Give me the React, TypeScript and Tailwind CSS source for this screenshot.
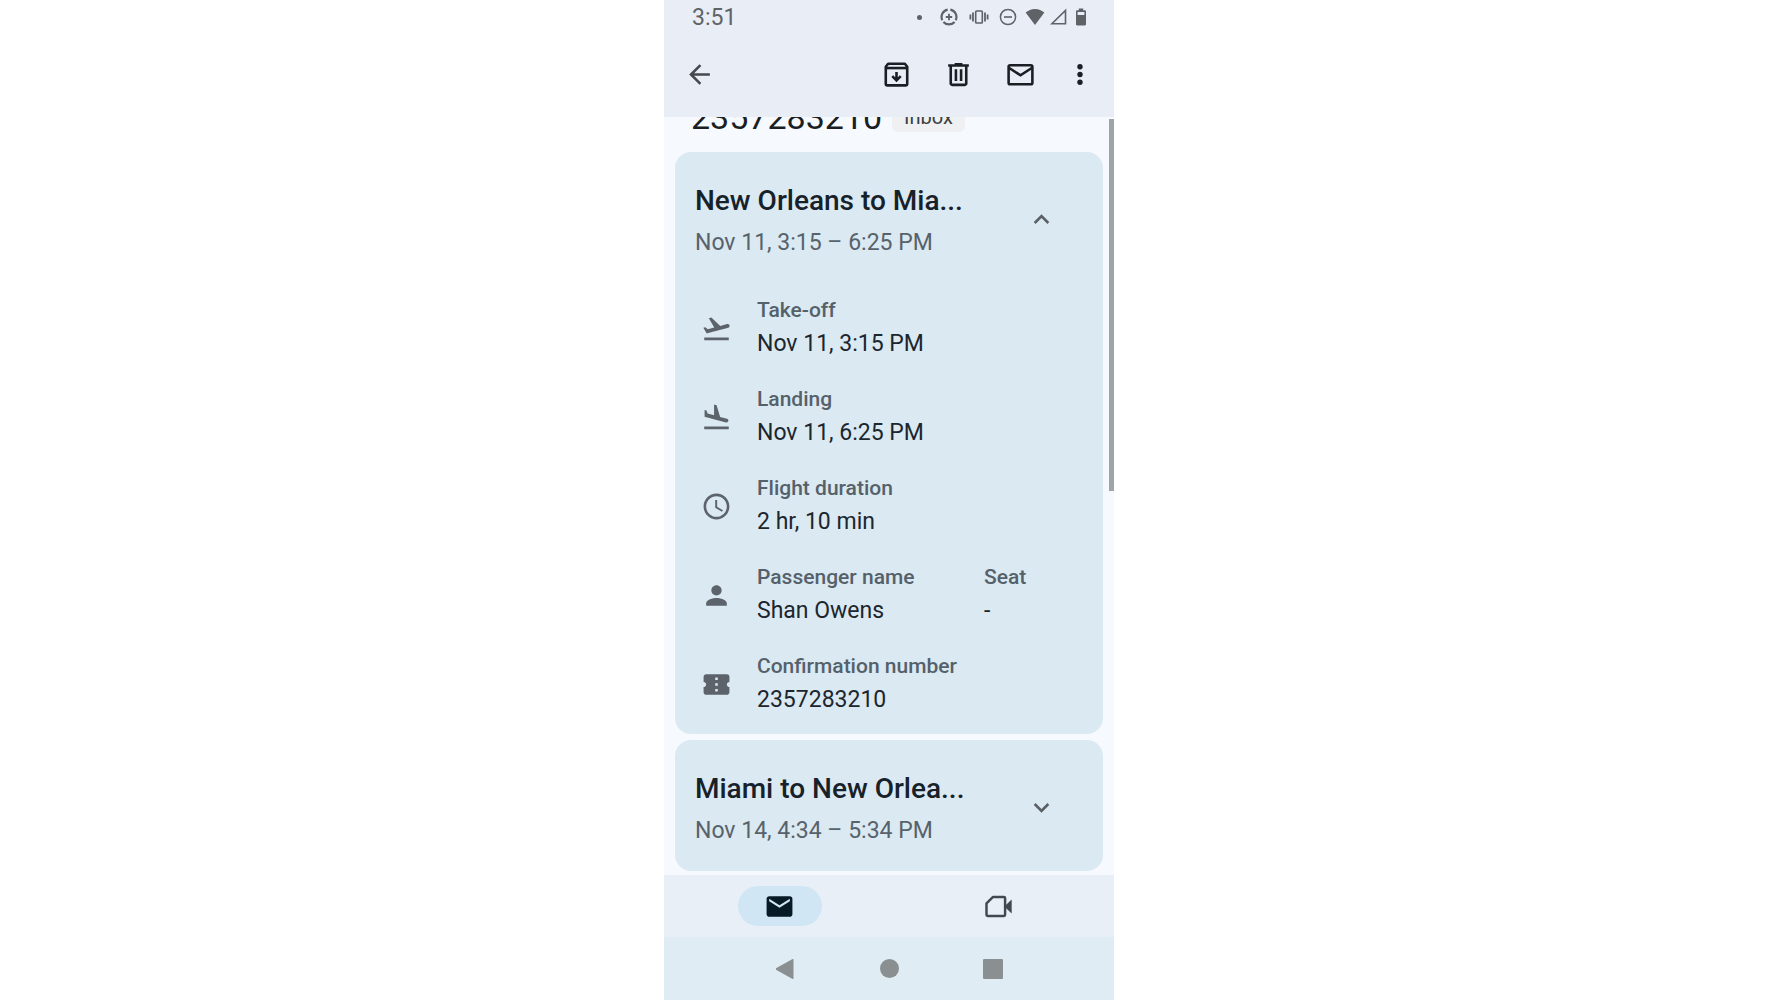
import { useState } from 'react';
import type { ReactNode } from 'react';
import {
  MdArrowBack,
  MdConfirmationNumber,
  MdExpandLess,
  MdExpandMore,
  MdFlightLand,
  MdFlightTakeoff,
  MdMail,
  MdPerson,
  MdSchedule,
} from 'react-icons/md';

type Field = { label: string; value: string };
type Detail = { icon: ReactNode; fields: Field[] };
type Flight = { id: string; title: string; time: string; details: Detail[] };

const flights: Flight[] = [
  {
    id: 'outbound',
    title: 'New Orleans to Mia...',
    time: 'Nov 11, 3:15 – 6:25 PM',
    details: [
      {
        icon: <MdFlightTakeoff />,
        fields: [{ label: 'Take-off', value: 'Nov 11, 3:15 PM' }],
      },
      {
        icon: <MdFlightLand />,
        fields: [{ label: 'Landing', value: 'Nov 11, 6:25 PM' }],
      },
      {
        icon: <MdSchedule />,
        fields: [{ label: 'Flight duration', value: '2 hr, 10 min' }],
      },
      {
        icon: <MdPerson />,
        fields: [
          { label: 'Passenger name', value: 'Shan Owens' },
          { label: 'Seat', value: '-' },
        ],
      },
      {
        icon: <MdConfirmationNumber />,
        fields: [{ label: 'Confirmation number', value: '2357283210' }],
      },
    ],
  },
  {
    id: 'return',
    title: 'Miami to New Orlea...',
    time: 'Nov 14, 4:34 – 5:34 PM',
    details: [],
  },
];

function StatusBar() {
  return (
    <div className="flex h-9 items-center justify-between pr-[27px] pl-7 text-[#5f6368]">
      <span className="text-[23px]">3:51</span>
      <div className="flex items-center pb-0.5">
        <span className="mr-[18px] size-[5px] rounded-full bg-current" />
        {/* data saver */}
        <svg className="mr-[11px] size-[18px]" viewBox="0 0 18 18" fill="none" stroke="currentColor">
          <path d="M10.3 1.6a7.5 7.5 0 0 1 5.4 10.6M14.6 13.9a7.5 7.5 0 0 1-11.2 0M2.3 12.2A7.5 7.5 0 0 1 7.7 1.6" strokeWidth="2.2" />
          <path d="M9 5.8v6.4M5.8 9h6.4" strokeWidth="1.8" />
        </svg>
        {/* vibrate */}
        <svg className="mr-2.5 h-[18px] w-5" viewBox="0 0 20 18" fill="none" stroke="currentColor">
          <rect x="6.7" y="3" width="6.6" height="12" rx="0.8" strokeWidth="1.6" />
          <path d="M4 4.5v9M16 4.5v9M1.4 6.5v5M18.6 6.5v5" strokeWidth="1.8" />
        </svg>
        {/* do not disturb */}
        <svg className="mr-2 size-[18px]" viewBox="0 0 18 18" fill="none" stroke="currentColor">
          <circle cx="9" cy="9" r="7.6" strokeWidth="1.5" />
          <path d="M5 9h8" strokeWidth="1.6" />
        </svg>
        {/* wifi */}
        <svg className="mr-[5px] h-[18px] w-5" viewBox="0 0 20 18" fill="currentColor">
          <path d="M10 17 .6 4.6C3.2 2.3 6.3.9 10 .9s6.8 1.4 9.4 3.7z" />
        </svg>
        {/* signal */}
        <svg className="mr-2 h-[18px] w-[17px]" viewBox="0 0 17 18" fill="none" stroke="currentColor">
          <path d="M15.5 2.4v13.4H1.9z" strokeWidth="1.6" />
        </svg>
        {/* battery */}
        <svg className="h-[18px] w-3" viewBox="0 0 12 18" fill="currentColor">
          <path fillRule="evenodd" d="M3.8.5h4.4v1.7h1.6c.7 0 1.2.5 1.2 1.2v12.9c0 .7-.5 1.2-1.2 1.2H2.2c-.7 0-1.2-.5-1.2-1.2V3.4c0-.7.5-1.2 1.2-1.2h1.6zM2.6 4v3h6.8V4z" />
        </svg>
      </div>
    </div>
  );
}

function AppBar() {
  return (
    <div className="flex h-[81px] items-center justify-between pr-5 pb-1 pl-5 text-[#1b1f23]">
      <button type="button" aria-label="Back" className="text-[#45494d]">
        <MdArrowBack className="size-[31px]" />
      </button>
      <div className="flex gap-[31px]">
        <button type="button" aria-label="Archive">
          <svg className="size-[31px]" viewBox="0 0 24 24" fill="none" stroke="currentColor" strokeWidth="2">
            <path d="M5.5 3.7h13L20.3 6v13.2c0 .7-.5 1.2-1.2 1.2H4.9c-.7 0-1.2-.5-1.2-1.2V6z" strokeLinejoin="round" />
            <path d="M4 7h16" />
            <path d="M12 10v6.2M8.7 13.2l3.3 3.3 3.3-3.3" />
          </svg>
        </button>
        <button type="button" aria-label="Delete">
          <svg className="size-[31px]" viewBox="0 0 24 24" fill="currentColor">
            <path d="M7 21c-.55 0-1.02-.2-1.41-.59A1.93 1.93 0 0 1 5 19V6H4V4h5V3h6v1h5v2h-1v13c0 .55-.2 1.02-.59 1.41-.39.39-.86.59-1.41.59H7ZM17 6H7v13h10V6ZM9 17h2V8H9v9Zm4 0h2V8h-2v9Z" />
          </svg>
        </button>
        <button type="button" aria-label="Mark as unread">
          <svg className="size-[31px]" viewBox="0 0 24 24" fill="none" stroke="currentColor" strokeWidth="2">
            <rect x="2.8" y="4.8" width="18.4" height="14.8" rx="1.2" />
            <path d="m3 6.8 9 5.8 9-5.8" />
          </svg>
        </button>
        <button type="button" aria-label="More options">
          <svg className="h-[31px] w-[27px]" viewBox="0 0 27 31" fill="currentColor">
            <circle cx="13" cy="7.8" r="2.7" />
            <circle cx="13" cy="15.5" r="2.7" />
            <circle cx="13" cy="23.2" r="2.7" />
          </svg>
        </button>
      </div>
    </div>
  );
}

function FlightCard({ flight }: { flight: Flight }) {
  const [open, setOpen] = useState(flight.details.length > 0);
  const Chevron = open ? MdExpandLess : MdExpandMore;

  return (
    <section className="rounded-2xl bg-[#dbe9f2]">
      <div className="flex items-center justify-between pt-7 pr-[46px] pb-[19px] pl-5">
        <div>
          <h2 className="text-[28px] leading-[42px] font-medium text-[#17212a]">
            {flight.title}
          </h2>
          <p className="text-[23px] leading-[42px] text-[#57626b]">{flight.time}</p>
        </div>
        <button
          type="button"
          aria-label={open ? 'Collapse' : 'Expand'}
          aria-expanded={open}
          onClick={() => setOpen(!open)}
          className="pb-1.5 text-[#5a6066]"
        >
          <Chevron className="size-[31px]" />
        </button>
      </div>
      {open && flight.details.length > 0 && (
        <div className="flex flex-col gap-[23px] pt-3 pb-[17px] pl-[26px]">
          {flight.details.map(detail => (
            <div key={detail.fields[0].label} className="flex items-center gap-[25px]">
              <span className="text-[31px] text-[#5c636b]">{detail.icon}</span>
              <dl className="flex">
                {detail.fields.map(field => (
                  <div key={field.label} className="min-w-[227px]">
                    <dt className="text-[21px] leading-[31px] font-medium text-[#55616a]">
                      {field.label}
                    </dt>
                    <dd className="text-[23px] leading-[35px] text-[#1c262e]">{field.value}</dd>
                  </div>
                ))}
              </dl>
            </div>
          ))}
        </div>
      )}
    </section>
  );
}

function BottomNav() {
  return (
    <nav className="grid h-[62px] grid-cols-2 items-center justify-items-center bg-[#e9eff7] px-1.5">
      <button
        type="button"
        aria-label="Mail"
        className="flex h-10 w-[84px] items-center justify-center rounded-full bg-[#d1e6f5] text-[#071b26]"
      >
        <MdMail className="size-[31px]" />
      </button>
      <button type="button" aria-label="Meet" className="text-[#43474e]">
        <svg className="size-[31px]" viewBox="0 0 24 24" fill="none" stroke="currentColor" strokeWidth="1.9">
          <path d="M7.6 4.7h8.6c.5 0 .9.4.9.9v12.8c0 .5-.4.9-.9.9H3.600c-.5 0-.9-.4-.9-.9V9.6z" strokeLinejoin="round" />
          <path d="m17.500 11 4.700-4.400v10.800L17.500 13z" fill="currentColor" stroke="none" />
        </svg>
      </button>
    </nav>
  );
}

function SystemNav() {
  return (
    <div className="flex h-[63px] items-center justify-center gap-[84px] bg-[#dfecf3] text-[#8a8f92]">
      <button type="button" aria-label="System back">
        <svg className="size-5" viewBox="1 0 20 20" fill="currentColor">
          <path d="M18.5.6v18.8c0 .5-.5.7-.9.5L1 10.700c-.5-.3-.5-1.1 0-1.400L17.600.1c.4-.2.9 0 .9.5z" />
        </svg>
      </button>
      <button type="button" aria-label="Home" className="size-[19px] rounded-full bg-current" />
      <button type="button" aria-label="Recent apps" className="size-5 rounded-[1px] bg-current" />
    </div>
  );
}

export default function App() {
  return (
    <div className="min-h-screen bg-white font-['Roboto',sans-serif]">
      <div className="mx-auto flex h-screen max-w-[450px] flex-col bg-[#f6f9fe]">
        <header className="bg-[#e9eef6]">
          <StatusBar />
          <AppBar />
        </header>
        <main className="relative min-h-0 flex-1 overflow-hidden">
          <div className="-mt-[22px] px-[11px]">
            <div className="flex items-start gap-2.5 pl-4">
              <h1 className="text-[34px] leading-[45px] text-[#1b1f23]">2357283210</h1>
              <span className="rounded-md bg-[#eef0f1] px-3 pt-2 pb-px text-xl leading-7 text-[#3c4043]">
                Inbox
              </span>
            </div>
            <div className="mt-3 flex flex-col gap-1.5">
              {flights.map(flight => (
                <FlightCard key={flight.id} flight={flight} />
              ))}
            </div>
          </div>
          <div className="absolute top-0.5 right-0 h-[372px] w-[5px] bg-[#9fa4a8]" />
        </main>
        <BottomNav />
        <SystemNav />
      </div>
    </div>
  );
}
